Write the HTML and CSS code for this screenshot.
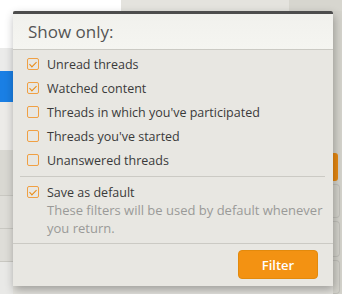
FILE: index.html
```html
<!DOCTYPE html>
<html lang="en">
<head>
  <meta charset="UTF-8" />
  <meta name="viewport" content="width=device-width, initial-scale=1.0" />
  <title>Thread filters</title>
  <link rel="stylesheet" href="styles.css">
</head>
<body>
  <div class="page">
    <!-- Dimmed page behind the menu -->
    <div class="top-strip">
      <div class="seg seg-white"></div>
      <div class="seg seg-mid"></div>
      <div class="seg seg-dark"></div>
    </div>
    <div class="main-row">
      <div class="side-left">
        <div class="blk blk-white"></div>
        <div class="blk blk-light"></div>
        <div class="blk blk-blue"></div>
        <div class="blk blk-pale"></div>
        <div class="blk blk-gray"></div>
        <div class="blk blk-line"></div>
        <div class="blk blk-line"></div>
        <div class="blk blk-rest"></div>
      </div>
      <div class="center"></div>
      <div class="side-right">
        <div class="blk blk-r1"></div>
        <div class="blk blk-orange"></div>
        <div class="blk blk-box"></div>
        <div class="blk blk-box tall"></div>
        <div class="blk blk-box"></div>
      </div>
    </div>

    <!-- Filter menu -->
    <div class="menu">
      <div class="menu-header">Show only:</div>
      <div class="menu-body">
        <label class="check-row"><span class="box checked"></span>Unread threads</label>
        <label class="check-row"><span class="box checked"></span>Watched content</label>
        <label class="check-row"><span class="box"></span>Threads in which you've participated</label>
        <label class="check-row"><span class="box"></span>Threads you've started</label>
        <label class="check-row"><span class="box"></span>Unanswered threads</label>
        <hr class="menu-sep" />
        <label class="check-row save-row"><span class="box checked"></span>Save as default</label>
        <div class="hint">These filters will be used by default whenever you return.</div>
      </div>
      <div class="menu-footer">
        <button class="filter-btn">Filter</button>
      </div>
    </div>
  </div>
</body>
</html>
```

FILE: styles.css
```css
body {
  margin: 0;
  font-family: "Open Sans", "Noto Sans", Arial, sans-serif;
  background: #e6e6e3;
}

.page {
  position: relative;
  width: 342px;
  height: 294px;
  overflow: hidden;
}

.top-strip {
  display: flex;
  height: 11px;
}

.seg-white {
  width: 121px;
  background: #ffffff;
}

.seg-mid {
  width: 168px;
  background: #e4e3de;
}

.seg-dark {
  flex: 1;
  background: #d7d6cf;
}

.main-row {
  display: flex;
  height: 283px;
}

.side-left {
  width: 13px;
  display: flex;
  flex-direction: column;
}

.blk-white { height: 37px; background: #ffffff; }
.blk-light { height: 23px; background: #ebebea; }
.blk-blue { height: 31px; background: #1a7fe4; }
.blk-pale { height: 48px; background: #ecebe8; }
.blk-gray { height: 45px; background: #d9d8d2; border-bottom: 1px solid #c9c8c2; }
.blk-line { height: 32px; background: #deddd8; border-bottom: 1px solid #c9c8c2; }
.blk-rest { flex: 1; background: #e9e9e7; }

.center {
  flex: 1;
  background: #e4e3de;
}

.side-right {
  width: 9px;
  display: flex;
  flex-direction: column;
  background: #d4d3cc;
}

.blk-r1 { height: 151px; }

.blk-orange {
  height: 30px;
  width: 5px;
  background: #e98a12;
  border-radius: 0 3px 3px 0;
}

.blk-box {
  height: 34px;
  margin: 3px 2px 0 0;
  border: 1px solid #c2c1bb;
  border-left: none;
  border-radius: 0 4px 4px 0;
}

.blk-box.tall { height: 36px; }

/* Menu */
.menu {
  position: absolute;
  left: 13px;
  top: 11px;
  width: 320px;
  border-top: 3px solid #4d4d4d;
  border-radius: 2px 2px 0 0;
  background: #e8e7e2;
  box-shadow: 1px 4px 10px rgba(0, 0, 0, 0.3);
}

.menu-header {
  height: 35px;
  line-height: 35px;
  padding-left: 15px;
  font-size: 17px;
  color: #555555;
  background: linear-gradient(#f1f1ed, #f5f5f1);
  border-bottom: 1px solid #cbcac4;
}

.menu-body {
  padding: 2px 8px 6px 14px;
  border-bottom: 1px solid #cbcac4;
}

.check-row {
  display: flex;
  align-items: center;
  height: 24px;
  font-size: 12.5px;
  color: #3a3a3a;
}

.save-row {
  height: 18px;
  margin-top: 6px;
}

.box {
  position: relative;
  width: 10px;
  height: 10px;
  margin-right: 8px;
  border: 1.5px solid #f0a043;
  border-radius: 2px;
  flex-shrink: 0;
}

.box.checked::after {
  content: "";
  position: absolute;
  left: 2.5px;
  top: 0.5px;
  width: 3px;
  height: 6px;
  border: solid #e98a12;
  border-width: 0 1.5px 1.5px 0;
  transform: rotate(45deg);
}

.menu-sep {
  margin: 4px 0 0 -7px;
  border: none;
  border-top: 1px solid #cbcac4;
}

.hint {
  padding-left: 20px;
  font-size: 13px;
  line-height: 18px;
  color: #9a9a98;
}

.menu-footer {
  display: flex;
  justify-content: flex-end;
  padding: 6px 15px 7px;
}

.filter-btn {
  width: 80px;
  height: 29px;
  border: 1px solid #e38a0c;
  border-radius: 4px;
  background: #f39212;
  color: #ffffff;
  font-family: inherit;
  font-size: 13px;
  font-weight: 600;
  cursor: pointer;
}
```
